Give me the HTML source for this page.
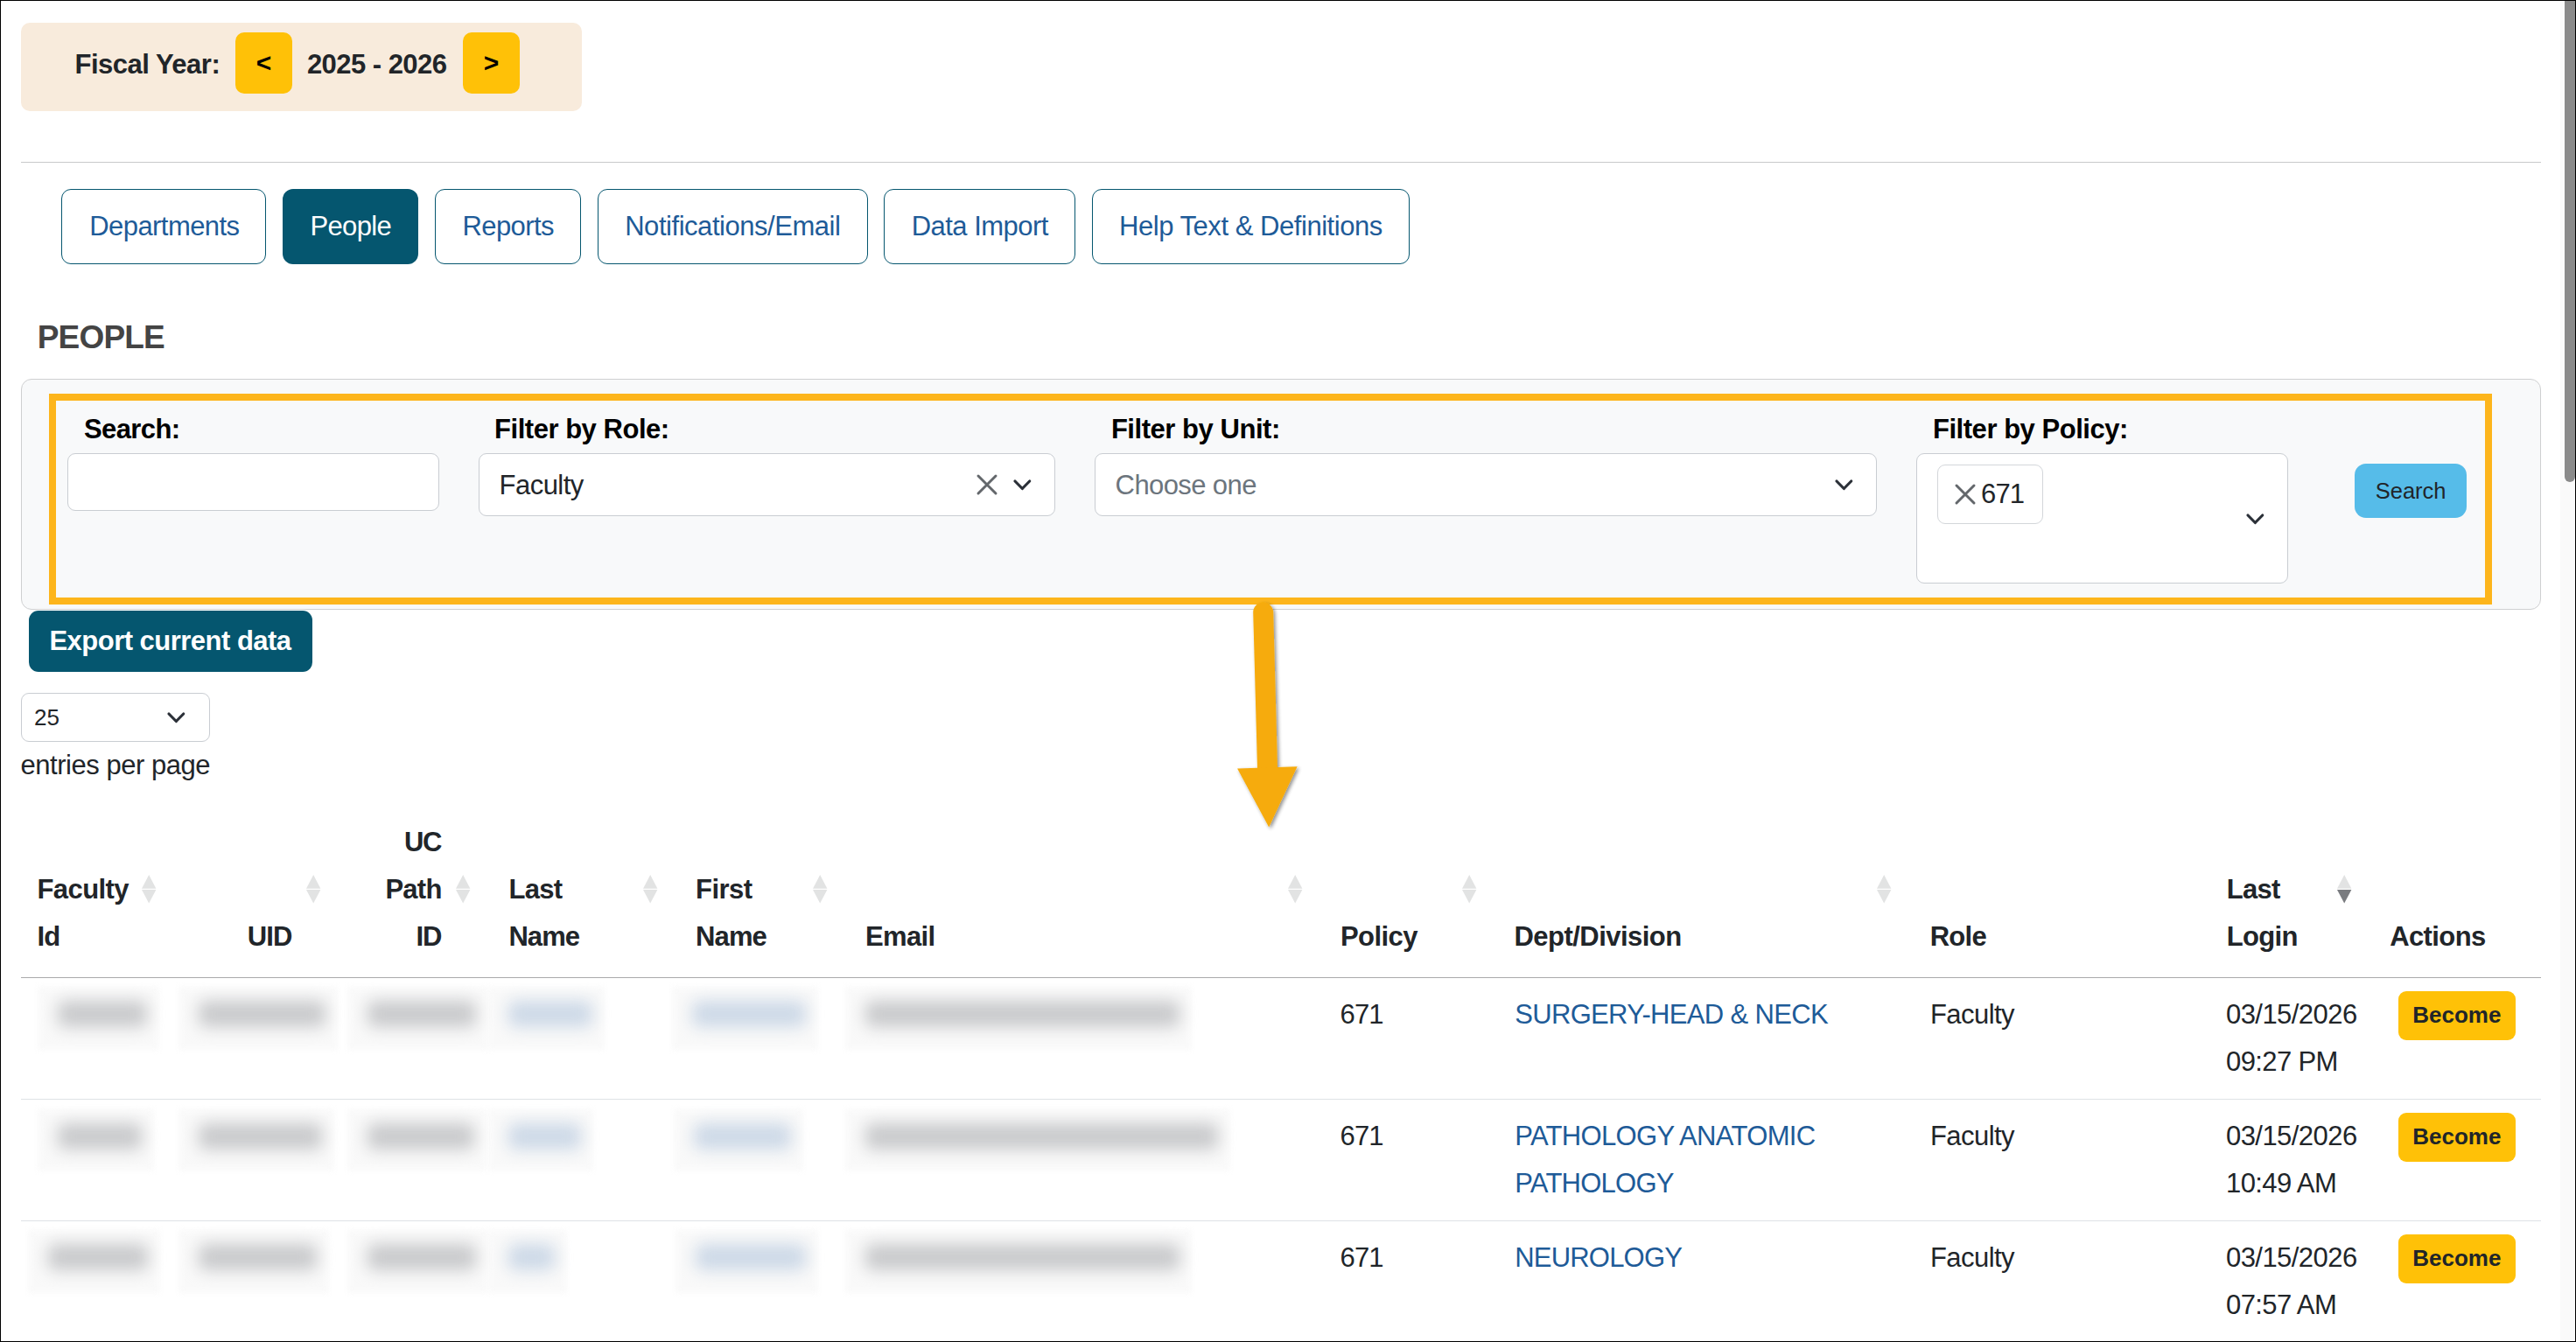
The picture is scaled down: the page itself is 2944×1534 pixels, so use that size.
<!DOCTYPE html>
<html><head><meta charset="utf-8"><title>People</title><style>
html,body{margin:0;padding:0;}
body{width:2944px;height:1534px;overflow:hidden;background:#fff;position:relative;font-family:"Liberation Sans",sans-serif;}
.t{position:absolute;white-space:nowrap;font-family:"Liberation Sans",sans-serif;}
.b{position:absolute;}
#frame{position:absolute;left:0;top:0;width:2944px;height:1534px;box-sizing:border-box;border:1px solid #000;pointer-events:none;z-index:10}
</style></head><body>
<div class="b" style="left:2926px;top:0px;width:18px;height:1534px;background:#fafafa"></div>
<div class="b" style="left:2931px;top:1px;width:12px;height:550px;background:#8a8a8a;border-radius:0 0 6px 6px"></div>
<div class="b" style="left:24px;top:26px;width:641px;height:101px;background:#f8ebdc;border-radius:10px"></div>
<div class="t" style="left:85.5px;top:58.0px;font-size:31.0px;line-height:31.0px;font-weight:bold;color:#212529;letter-spacing:-0.504px">Fiscal Year:</div>
<div class="b" style="left:269px;top:37px;width:65px;height:70px;background:#ffc107;border-radius:10px"></div>
<div class="b" style="left:529px;top:37px;width:65px;height:70px;background:#ffc107;border-radius:10px"></div>
<div class="t" style="left:350.9px;top:58.0px;font-size:31.0px;line-height:31.0px;font-weight:bold;color:#212529;letter-spacing:-0.534px">2025 - 2026</div>
<div class="t" style="left:292.8px;top:57.0px;font-size:30px;line-height:30px;font-weight:bold;color:#000;letter-spacing:0.000px">&lt;</div>
<div class="t" style="left:552.8px;top:57.0px;font-size:30px;line-height:30px;font-weight:bold;color:#000;letter-spacing:0.000px">&gt;</div>
<div class="b" style="left:24px;top:185px;width:2880px;height:1px;background:#c8c9ca"></div>
<div class="b" style="left:70px;top:216px;width:234px;height:86px;border:1px solid #05566f;border-radius:11px;box-sizing:border-box"></div>
<div class="t" style="left:102.3px;top:242.8px;font-size:31.0px;line-height:31.0px;font-weight:normal;color:#1e5b98;letter-spacing:-0.572px">Departments</div>
<div class="b" style="left:323px;top:216px;width:155px;height:86px;background:#05566f;border-radius:12px"></div>
<div class="t" style="left:354.4px;top:242.8px;font-size:31.0px;line-height:31.0px;font-weight:normal;color:#fff;letter-spacing:-0.623px">People</div>
<div class="b" style="left:497px;top:216px;width:167px;height:86px;border:1px solid #05566f;border-radius:11px;box-sizing:border-box"></div>
<div class="t" style="left:528.5px;top:242.8px;font-size:31.0px;line-height:31.0px;font-weight:normal;color:#1e5b98;letter-spacing:-0.583px">Reports</div>
<div class="b" style="left:683px;top:216px;width:309px;height:86px;border:1px solid #05566f;border-radius:11px;box-sizing:border-box"></div>
<div class="t" style="left:714.2px;top:242.8px;font-size:31.0px;line-height:31.0px;font-weight:normal;color:#1e5b98;letter-spacing:-0.457px">Notifications/Email</div>
<div class="b" style="left:1010px;top:216px;width:219px;height:86px;border:1px solid #05566f;border-radius:11px;box-sizing:border-box"></div>
<div class="t" style="left:1041.7px;top:242.8px;font-size:31.0px;line-height:31.0px;font-weight:normal;color:#1e5b98;letter-spacing:-0.522px">Data Import</div>
<div class="b" style="left:1248px;top:216px;width:363px;height:86px;border:1px solid #05566f;border-radius:11px;box-sizing:border-box"></div>
<div class="t" style="left:1279.0px;top:242.8px;font-size:31.0px;line-height:31.0px;font-weight:normal;color:#1e5b98;letter-spacing:-0.457px">Help Text &amp; Definitions</div>
<div class="t" style="left:42.7px;top:367.2px;font-size:37.0px;line-height:37.0px;font-weight:bold;color:#444;letter-spacing:-0.811px">PEOPLE</div>
<div class="b" style="left:24px;top:433px;width:2880px;height:264px;background:#f8f9fa;border:1px solid #cfd0d1;border-radius:12px;box-sizing:border-box"></div>
<div class="t" style="left:96.0px;top:475.0px;font-size:31.0px;line-height:31.0px;font-weight:bold;color:#000;letter-spacing:-0.612px">Search:</div>
<div class="t" style="left:565.1px;top:475.0px;font-size:31.0px;line-height:31.0px;font-weight:bold;color:#000;letter-spacing:-0.476px">Filter by Role:</div>
<div class="t" style="left:1269.9px;top:475.0px;font-size:31.0px;line-height:31.0px;font-weight:bold;color:#000;letter-spacing:-0.460px">Filter by Unit:</div>
<div class="t" style="left:2209.0px;top:475.0px;font-size:31.0px;line-height:31.0px;font-weight:bold;color:#000;letter-spacing:-0.465px">Filter by Policy:</div>
<div class="b" style="left:77px;top:518px;width:425px;height:66px;background:#fff;border:1px solid #c9cdd2;border-radius:9px;box-sizing:border-box"></div>
<div class="b" style="left:547px;top:518px;width:659px;height:72px;background:#fff;border:1px solid #c9cdd2;border-radius:9px;box-sizing:border-box"></div>
<div class="b" style="left:1251px;top:518px;width:894px;height:72px;background:#fff;border:1px solid #c9cdd2;border-radius:9px;box-sizing:border-box"></div>
<div class="b" style="left:2190px;top:518px;width:425px;height:149px;background:#fff;border:1px solid #c9cdd2;border-radius:9px;box-sizing:border-box"></div>
<div class="t" style="left:570.6px;top:538.7px;font-size:31.0px;line-height:31.0px;font-weight:normal;color:#212529;letter-spacing:-0.537px">Faculty</div>
<div class="t" style="left:1274.6px;top:538.7px;font-size:31.0px;line-height:31.0px;font-weight:normal;color:#6c757d;letter-spacing:-0.599px">Choose one</div>
<div class="b" style="left:2214px;top:531px;width:121px;height:68px;background:#fff;border:1px solid #d3d6da;border-radius:9px;box-sizing:border-box"></div>
<div class="t" style="left:2264.0px;top:548.5px;font-size:31.0px;line-height:31.0px;font-weight:normal;color:#212529;letter-spacing:-0.835px">671</div>
<div class="b" style="left:2691px;top:530px;width:128px;height:62px;background:#56bce9;border-radius:13px"></div>
<div class="t" style="left:2714.7px;top:549.0px;font-size:25.5px;line-height:25.5px;font-weight:normal;color:#212529;letter-spacing:0.000px">Search</div>
<svg class="b" style="left:1114.5px;top:541.2px" width="26" height="26"><path d="M3 3L23 23M23 3L3 23" stroke="#63676b" stroke-width="3" stroke-linecap="round" fill="none"/></svg>
<svg class="b" style="left:1155.5500000000002px;top:546.0px" width="24.7" height="16.5"><path d="M4 4L12.35 12.5L20.7 4" stroke="#2b3038" stroke-width="3.2" stroke-linecap="round" stroke-linejoin="round" fill="none"/></svg>
<svg class="b" style="left:2094.55px;top:546.1px" width="24.7" height="16.5"><path d="M4 4L12.35 12.5L20.7 4" stroke="#2b3038" stroke-width="3.2" stroke-linecap="round" stroke-linejoin="round" fill="none"/></svg>
<svg class="b" style="left:2564.85px;top:584.8px" width="24.7" height="16.5"><path d="M4 4L12.35 12.5L20.7 4" stroke="#2b3038" stroke-width="3.2" stroke-linecap="round" stroke-linejoin="round" fill="none"/></svg>
<svg class="b" style="left:2232.5px;top:551.8px" width="26" height="26"><path d="M3 3L23 23M23 3L3 23" stroke="#63676b" stroke-width="3" stroke-linecap="round" fill="none"/></svg>
<div class="b" style="left:56px;top:450px;width:2792px;height:241px;border:8px solid #fdb51b;box-sizing:border-box"></div>
<div class="b" style="left:33px;top:698px;width:324px;height:70px;background:#05566f;border-radius:11px"></div>
<div class="t" style="left:56.4px;top:717.1px;font-size:31.0px;line-height:31.0px;font-weight:bold;color:#fff;letter-spacing:-0.513px">Export current data</div>
<div class="b" style="left:24px;top:792px;width:216px;height:56px;background:#fff;border:1px solid #c9cdd2;border-radius:9px;box-sizing:border-box"></div>
<div class="t" style="left:39.0px;top:807.2px;font-size:26px;line-height:26px;font-weight:normal;color:#212529;letter-spacing:0.000px">25</div>
<svg class="b" style="left:189.45000000000002px;top:811.5px" width="24.7" height="16.5"><path d="M4 4L12.35 12.5L20.7 4" stroke="#2b3038" stroke-width="3.2" stroke-linecap="round" stroke-linejoin="round" fill="none"/></svg>
<div class="t" style="left:23.6px;top:858.9px;font-size:31.0px;line-height:31.0px;font-weight:normal;color:#212529;letter-spacing:-0.482px">entries per page</div>
<div class="t" style="left:462.1px;top:947.0px;font-size:31.0px;line-height:31.0px;font-weight:bold;color:#212529;letter-spacing:-1.443px">UC</div>
<div class="t" style="left:440.4px;top:1001.0px;font-size:31.0px;line-height:31.0px;font-weight:bold;color:#212529;letter-spacing:-0.722px">Path</div>
<div class="t" style="left:475.4px;top:1055.4px;font-size:31.0px;line-height:31.0px;font-weight:bold;color:#212529;letter-spacing:-1.000px">ID</div>
<div class="t" style="left:282.8px;top:1055.4px;font-size:31.0px;line-height:31.0px;font-weight:bold;color:#212529;letter-spacing:-0.862px">UID</div>
<div class="t" style="left:42.5px;top:1001.0px;font-size:31.0px;line-height:31.0px;font-weight:bold;color:#212529;letter-spacing:-0.583px">Faculty</div>
<div class="t" style="left:42.5px;top:1055.4px;font-size:31.0px;line-height:31.0px;font-weight:bold;color:#212529;letter-spacing:-0.890px">Id</div>
<div class="t" style="left:581.4px;top:1001.0px;font-size:31.0px;line-height:31.0px;font-weight:bold;color:#212529;letter-spacing:-0.686px">Last</div>
<div class="t" style="left:581.4px;top:1055.4px;font-size:31.0px;line-height:31.0px;font-weight:bold;color:#212529;letter-spacing:-0.908px">Name</div>
<div class="t" style="left:795.1px;top:1001.0px;font-size:31.0px;line-height:31.0px;font-weight:bold;color:#212529;letter-spacing:-0.542px">First</div>
<div class="t" style="left:795.1px;top:1055.4px;font-size:31.0px;line-height:31.0px;font-weight:bold;color:#212529;letter-spacing:-0.908px">Name</div>
<div class="t" style="left:989.0px;top:1055.4px;font-size:31.0px;line-height:31.0px;font-weight:bold;color:#212529;letter-spacing:-0.667px">Email</div>
<div class="t" style="left:1532.0px;top:1055.4px;font-size:31.0px;line-height:31.0px;font-weight:bold;color:#212529;letter-spacing:-0.589px">Policy</div>
<div class="t" style="left:1730.5px;top:1055.4px;font-size:31.0px;line-height:31.0px;font-weight:bold;color:#212529;letter-spacing:-0.532px">Dept/Division</div>
<div class="t" style="left:2205.7px;top:1055.4px;font-size:31.0px;line-height:31.0px;font-weight:bold;color:#212529;letter-spacing:-0.722px">Role</div>
<div class="t" style="left:2544.7px;top:1001.0px;font-size:31.0px;line-height:31.0px;font-weight:bold;color:#212529;letter-spacing:-0.686px">Last</div>
<div class="t" style="left:2544.7px;top:1055.4px;font-size:31.0px;line-height:31.0px;font-weight:bold;color:#212529;letter-spacing:-0.680px">Login</div>
<div class="t" style="left:2731.2px;top:1055.4px;font-size:31.0px;line-height:31.0px;font-weight:bold;color:#212529;letter-spacing:-0.611px">Actions</div>
<svg class="b" style="left:162px;top:999px" width="17" height="35"><path d="M8.2 1L16.4 16.7L0 16.7Z" fill="#e2e3e3"/><path d="M0 18L16.4 18L8.2 33.6Z" fill="#e2e3e3"/></svg>
<svg class="b" style="left:350px;top:999px" width="17" height="35"><path d="M8.2 1L16.4 16.7L0 16.7Z" fill="#e2e3e3"/><path d="M0 18L16.4 18L8.2 33.6Z" fill="#e2e3e3"/></svg>
<svg class="b" style="left:520.6px;top:999px" width="17" height="35"><path d="M8.2 1L16.4 16.7L0 16.7Z" fill="#e2e3e3"/><path d="M0 18L16.4 18L8.2 33.6Z" fill="#e2e3e3"/></svg>
<svg class="b" style="left:735px;top:999px" width="17" height="35"><path d="M8.2 1L16.4 16.7L0 16.7Z" fill="#e2e3e3"/><path d="M0 18L16.4 18L8.2 33.6Z" fill="#e2e3e3"/></svg>
<svg class="b" style="left:928.7px;top:999px" width="17" height="35"><path d="M8.2 1L16.4 16.7L0 16.7Z" fill="#e2e3e3"/><path d="M0 18L16.4 18L8.2 33.6Z" fill="#e2e3e3"/></svg>
<svg class="b" style="left:1471.9px;top:999px" width="17" height="35"><path d="M8.2 1L16.4 16.7L0 16.7Z" fill="#e2e3e3"/><path d="M0 18L16.4 18L8.2 33.6Z" fill="#e2e3e3"/></svg>
<svg class="b" style="left:1670.7px;top:999px" width="17" height="35"><path d="M8.2 1L16.4 16.7L0 16.7Z" fill="#e2e3e3"/><path d="M0 18L16.4 18L8.2 33.6Z" fill="#e2e3e3"/></svg>
<svg class="b" style="left:2145.2px;top:999px" width="17" height="35"><path d="M8.2 1L16.4 16.7L0 16.7Z" fill="#e2e3e3"/><path d="M0 18L16.4 18L8.2 33.6Z" fill="#e2e3e3"/></svg>
<svg class="b" style="left:2671.4px;top:999px" width="17" height="35"><path d="M8.2 1L16.4 16.7L0 16.7Z" fill="#e2e3e3"/><path d="M0 18L16.4 18L8.2 33.6Z" fill="#7a7c80"/></svg>
<div class="b" style="left:24px;top:1117px;width:2880px;height:1px;background:#a9aaab"></div>
<div class="b" style="left:24px;top:1256px;width:2880px;height:1px;background:#dee2e6"></div>
<div class="b" style="left:24px;top:1395px;width:2880px;height:1px;background:#dee2e6"></div>
<div class="t" style="left:1531.5px;top:1144.0px;font-size:31.0px;line-height:31.0px;font-weight:normal;color:#212529;letter-spacing:-0.835px">671</div>
<div class="t" style="left:1731.2px;top:1144.0px;font-size:31.0px;line-height:31.0px;font-weight:normal;color:#1e5b98;letter-spacing:-0.664px">SURGERY-HEAD &amp; NECK</div>
<div class="t" style="left:2205.9px;top:1144.0px;font-size:31.0px;line-height:31.0px;font-weight:normal;color:#212529;letter-spacing:-0.537px">Faculty</div>
<div class="t" style="left:2544.0px;top:1144.0px;font-size:31.0px;line-height:31.0px;font-weight:normal;color:#212529;letter-spacing:-0.556px">03/15/2026</div>
<div class="t" style="left:2544.0px;top:1198.0px;font-size:31.0px;line-height:31.0px;font-weight:normal;color:#212529;letter-spacing:-0.611px">09:27 PM</div>
<div class="b" style="left:2741px;top:1133px;width:134px;height:56px;background:#ffc107;border-radius:9px"></div>
<div class="t" style="left:2757.2px;top:1147.0px;font-size:26px;line-height:26px;font-weight:bold;color:#212529;letter-spacing:0.000px">Become</div>
<div class="b" style="left:43px;top:1128px;width:139px;height:72px;background:#f8f8f8;filter:blur(3px);opacity:.8"></div>
<div class="b" style="left:204px;top:1128px;width:182px;height:72px;background:#f8f8f8;filter:blur(3px);opacity:.8"></div>
<div class="b" style="left:397px;top:1128px;width:161px;height:72px;background:#f8f8f8;filter:blur(3px);opacity:.8"></div>
<div class="b" style="left:558px;top:1128px;width:133px;height:72px;background:#f8f8f8;filter:blur(3px);opacity:.8"></div>
<div class="b" style="left:768px;top:1128px;width:167px;height:72px;background:#f8f8f8;filter:blur(3px);opacity:.8"></div>
<div class="b" style="left:966px;top:1128px;width:396px;height:72px;background:#f8f8f8;filter:blur(3px);opacity:.8"></div>
<div class="b" style="left:66px;top:1144px;width:102px;height:30px;background:#c9cacc;filter:blur(9px);border-radius:8px"></div>
<div class="b" style="left:227px;top:1144px;width:145px;height:30px;background:#c9cacc;filter:blur(9px);border-radius:8px"></div>
<div class="b" style="left:420px;top:1144px;width:124px;height:30px;background:#c9cacc;filter:blur(9px);border-radius:8px"></div>
<div class="b" style="left:581px;top:1144px;width:96px;height:30px;background:#cdd9e7;filter:blur(9px);border-radius:8px"></div>
<div class="b" style="left:791px;top:1144px;width:130px;height:30px;background:#cdd9e7;filter:blur(9px);border-radius:8px"></div>
<div class="b" style="left:989px;top:1144px;width:359px;height:30px;background:#c9cacc;filter:blur(9px);border-radius:8px"></div>
<div class="t" style="left:1531.5px;top:1283.0px;font-size:31.0px;line-height:31.0px;font-weight:normal;color:#212529;letter-spacing:-0.835px">671</div>
<div class="t" style="left:1731.2px;top:1283.0px;font-size:31.0px;line-height:31.0px;font-weight:normal;color:#1e5b98;letter-spacing:-0.675px">PATHOLOGY ANATOMIC</div>
<div class="t" style="left:1731.2px;top:1337.0px;font-size:31.0px;line-height:31.0px;font-weight:normal;color:#1e5b98;letter-spacing:-0.760px">PATHOLOGY</div>
<div class="t" style="left:2205.9px;top:1283.0px;font-size:31.0px;line-height:31.0px;font-weight:normal;color:#212529;letter-spacing:-0.537px">Faculty</div>
<div class="t" style="left:2544.0px;top:1283.0px;font-size:31.0px;line-height:31.0px;font-weight:normal;color:#212529;letter-spacing:-0.556px">03/15/2026</div>
<div class="t" style="left:2544.0px;top:1337.0px;font-size:31.0px;line-height:31.0px;font-weight:normal;color:#212529;letter-spacing:-0.604px">10:49 AM</div>
<div class="b" style="left:2741px;top:1272px;width:134px;height:56px;background:#ffc107;border-radius:9px"></div>
<div class="t" style="left:2757.2px;top:1286.0px;font-size:26px;line-height:26px;font-weight:bold;color:#212529;letter-spacing:0.000px">Become</div>
<div class="b" style="left:43px;top:1268px;width:133px;height:70px;background:#f8f8f8;filter:blur(3px);opacity:.8"></div>
<div class="b" style="left:204px;top:1268px;width:178px;height:70px;background:#f8f8f8;filter:blur(3px);opacity:.8"></div>
<div class="b" style="left:397px;top:1268px;width:159px;height:70px;background:#f8f8f8;filter:blur(3px);opacity:.8"></div>
<div class="b" style="left:558px;top:1268px;width:120px;height:70px;background:#f8f8f8;filter:blur(3px);opacity:.8"></div>
<div class="b" style="left:770px;top:1268px;width:148px;height:70px;background:#f8f8f8;filter:blur(3px);opacity:.8"></div>
<div class="b" style="left:966px;top:1268px;width:440px;height:70px;background:#f8f8f8;filter:blur(3px);opacity:.8"></div>
<div class="b" style="left:66px;top:1284px;width:96px;height:30px;background:#c9cacc;filter:blur(9px);border-radius:8px"></div>
<div class="b" style="left:227px;top:1284px;width:141px;height:30px;background:#c9cacc;filter:blur(9px);border-radius:8px"></div>
<div class="b" style="left:420px;top:1284px;width:122px;height:30px;background:#c9cacc;filter:blur(9px);border-radius:8px"></div>
<div class="b" style="left:581px;top:1284px;width:83px;height:30px;background:#cdd9e7;filter:blur(9px);border-radius:8px"></div>
<div class="b" style="left:793px;top:1284px;width:111px;height:30px;background:#cdd9e7;filter:blur(9px);border-radius:8px"></div>
<div class="b" style="left:989px;top:1284px;width:403px;height:30px;background:#c9cacc;filter:blur(9px);border-radius:8px"></div>
<div class="t" style="left:1531.5px;top:1422.0px;font-size:31.0px;line-height:31.0px;font-weight:normal;color:#212529;letter-spacing:-0.835px">671</div>
<div class="t" style="left:1731.2px;top:1422.0px;font-size:31.0px;line-height:31.0px;font-weight:normal;color:#1e5b98;letter-spacing:-0.799px">NEUROLOGY</div>
<div class="t" style="left:2205.9px;top:1422.0px;font-size:31.0px;line-height:31.0px;font-weight:normal;color:#212529;letter-spacing:-0.537px">Faculty</div>
<div class="t" style="left:2544.0px;top:1422.0px;font-size:31.0px;line-height:31.0px;font-weight:normal;color:#212529;letter-spacing:-0.556px">03/15/2026</div>
<div class="t" style="left:2544.0px;top:1476.0px;font-size:31.0px;line-height:31.0px;font-weight:normal;color:#212529;letter-spacing:-0.604px">07:57 AM</div>
<div class="b" style="left:2741px;top:1411px;width:134px;height:56px;background:#ffc107;border-radius:9px"></div>
<div class="t" style="left:2757.2px;top:1425.0px;font-size:26px;line-height:26px;font-weight:bold;color:#212529;letter-spacing:0.000px">Become</div>
<div class="b" style="left:32px;top:1406px;width:151px;height:72px;background:#f8f8f8;filter:blur(3px);opacity:.8"></div>
<div class="b" style="left:204px;top:1406px;width:172px;height:72px;background:#f8f8f8;filter:blur(3px);opacity:.8"></div>
<div class="b" style="left:397px;top:1406px;width:161px;height:72px;background:#f8f8f8;filter:blur(3px);opacity:.8"></div>
<div class="b" style="left:558px;top:1406px;width:90px;height:72px;background:#f8f8f8;filter:blur(3px);opacity:.8"></div>
<div class="b" style="left:772px;top:1406px;width:163px;height:72px;background:#f8f8f8;filter:blur(3px);opacity:.8"></div>
<div class="b" style="left:966px;top:1406px;width:396px;height:72px;background:#f8f8f8;filter:blur(3px);opacity:.8"></div>
<div class="b" style="left:55px;top:1422px;width:114px;height:30px;background:#c9cacc;filter:blur(9px);border-radius:8px"></div>
<div class="b" style="left:227px;top:1422px;width:135px;height:30px;background:#c9cacc;filter:blur(9px);border-radius:8px"></div>
<div class="b" style="left:420px;top:1422px;width:124px;height:30px;background:#c9cacc;filter:blur(9px);border-radius:8px"></div>
<div class="b" style="left:581px;top:1422px;width:53px;height:30px;background:#cdd9e7;filter:blur(9px);border-radius:8px"></div>
<div class="b" style="left:795px;top:1422px;width:126px;height:30px;background:#cdd9e7;filter:blur(9px);border-radius:8px"></div>
<div class="b" style="left:989px;top:1422px;width:359px;height:30px;background:#c9cacc;filter:blur(9px);border-radius:8px"></div>
<svg class="b" style="left:1400px;top:660px" width="100" height="300">
<defs><filter id="sh" x="-30%" y="-10%" width="160%" height="130%"><feGaussianBlur in="SourceAlpha" stdDeviation="2"/><feOffset dx="2" dy="2"/><feComponentTransfer><feFuncA type="linear" slope="0.45"/></feComponentTransfer><feMerge><feMergeNode/><feMergeNode in="SourceGraphic"/></feMerge></filter></defs>
<g filter="url(#sh)" fill="#f6ab0c">
<path d="M43.7 40 L48.5 217.5" stroke="#f6ab0c" stroke-width="23" stroke-linecap="round" fill="none"/>
<path d="M14.1 218.5 L82.6 216.3 L50.2 285.4 Z"/>
</g></svg>
<div id="frame"></div>
</body></html>
